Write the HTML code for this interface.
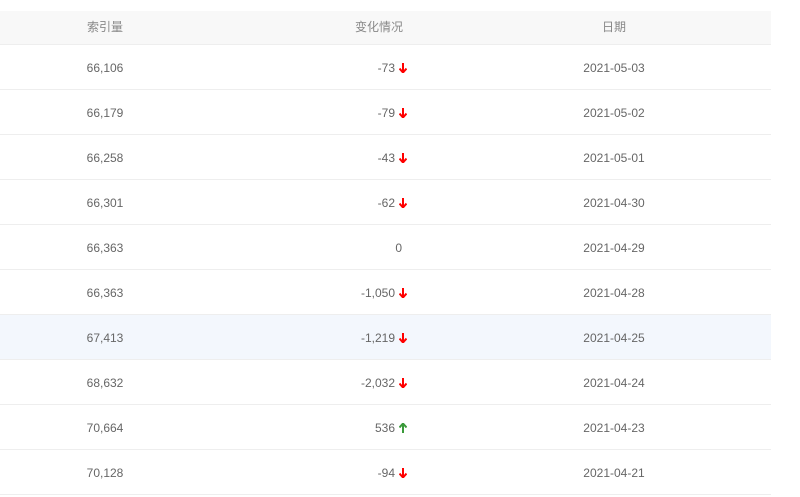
<!DOCTYPE html>
<html><head><meta charset="utf-8"><style>
body{margin:0;width:800px;height:497px;background:#fff;overflow:hidden;font-family:"Liberation Sans","Noto Sans CJK SC",sans-serif;font-size:12px;color:#666}
.r{position:absolute;left:0;width:771px;height:44px;border-bottom:1px solid #eee}
.h{top:11px;height:33px;background:#f8f8f8;color:#888;border-bottom:1px solid #eee}
.c{position:absolute;line-height:44px;top:1px}
.h .c{line-height:33px;top:0}
.a{left:55px;width:100px;text-align:center}
.b{right:364px;text-align:right}
.d{left:564px;width:100px;text-align:center}
.dn,.up{display:inline-block;width:8px;height:10px;margin-left:4px;vertical-align:-1px}
</style></head><body>
<div class="r h"><div class="c a">索引量</div><div class="c b" style="right:368px">变化情况</div><div class="c d">日期</div></div>
<div class="r" style="top:45px"><div class="c a">66,106</div><div class="c b">-73<svg class="dn" viewBox="0 0 8 10"><path d="M4 0V9M0.5 5.5L4 9.5L7.5 5.5" stroke="#f00" stroke-width="2" fill="none"/></svg></div><div class="c d">2021-05-03</div></div>
<div class="r" style="top:90px"><div class="c a">66,179</div><div class="c b">-79<svg class="dn" viewBox="0 0 8 10"><path d="M4 0V9M0.5 5.5L4 9.5L7.5 5.5" stroke="#f00" stroke-width="2" fill="none"/></svg></div><div class="c d">2021-05-02</div></div>
<div class="r" style="top:135px"><div class="c a">66,258</div><div class="c b">-43<svg class="dn" viewBox="0 0 8 10"><path d="M4 0V9M0.5 5.5L4 9.5L7.5 5.5" stroke="#f00" stroke-width="2" fill="none"/></svg></div><div class="c d">2021-05-01</div></div>
<div class="r" style="top:180px"><div class="c a">66,301</div><div class="c b">-62<svg class="dn" viewBox="0 0 8 10"><path d="M4 0V9M0.5 5.5L4 9.5L7.5 5.5" stroke="#f00" stroke-width="2" fill="none"/></svg></div><div class="c d">2021-04-30</div></div>
<div class="r" style="top:225px"><div class="c a">66,363</div><div class="c b" style="right:369px">0</div><div class="c d">2021-04-29</div></div>
<div class="r" style="top:270px"><div class="c a">66,363</div><div class="c b">-1,050<svg class="dn" viewBox="0 0 8 10"><path d="M4 0V9M0.5 5.5L4 9.5L7.5 5.5" stroke="#f00" stroke-width="2" fill="none"/></svg></div><div class="c d">2021-04-28</div></div>
<div class="r" style="top:315px;background:#f3f7fd"><div class="c a">67,413</div><div class="c b">-1,219<svg class="dn" viewBox="0 0 8 10"><path d="M4 0V9M0.5 5.5L4 9.5L7.5 5.5" stroke="#f00" stroke-width="2" fill="none"/></svg></div><div class="c d">2021-04-25</div></div>
<div class="r" style="top:360px"><div class="c a">68,632</div><div class="c b">-2,032<svg class="dn" viewBox="0 0 8 10"><path d="M4 0V9M0.5 5.5L4 9.5L7.5 5.5" stroke="#f00" stroke-width="2" fill="none"/></svg></div><div class="c d">2021-04-24</div></div>
<div class="r" style="top:405px"><div class="c a">70,664</div><div class="c b">536<svg class="up" viewBox="0 0 8 10"><path d="M4 10V1M0.5 4.5L4 0.5L7.5 4.5" stroke="#3a9a3a" stroke-width="2" fill="none"/></svg></div><div class="c d">2021-04-23</div></div>
<div class="r" style="top:450px"><div class="c a">70,128</div><div class="c b">-94<svg class="dn" viewBox="0 0 8 10"><path d="M4 0V9M0.5 5.5L4 9.5L7.5 5.5" stroke="#f00" stroke-width="2" fill="none"/></svg></div><div class="c d">2021-04-21</div></div>
</body></html>
